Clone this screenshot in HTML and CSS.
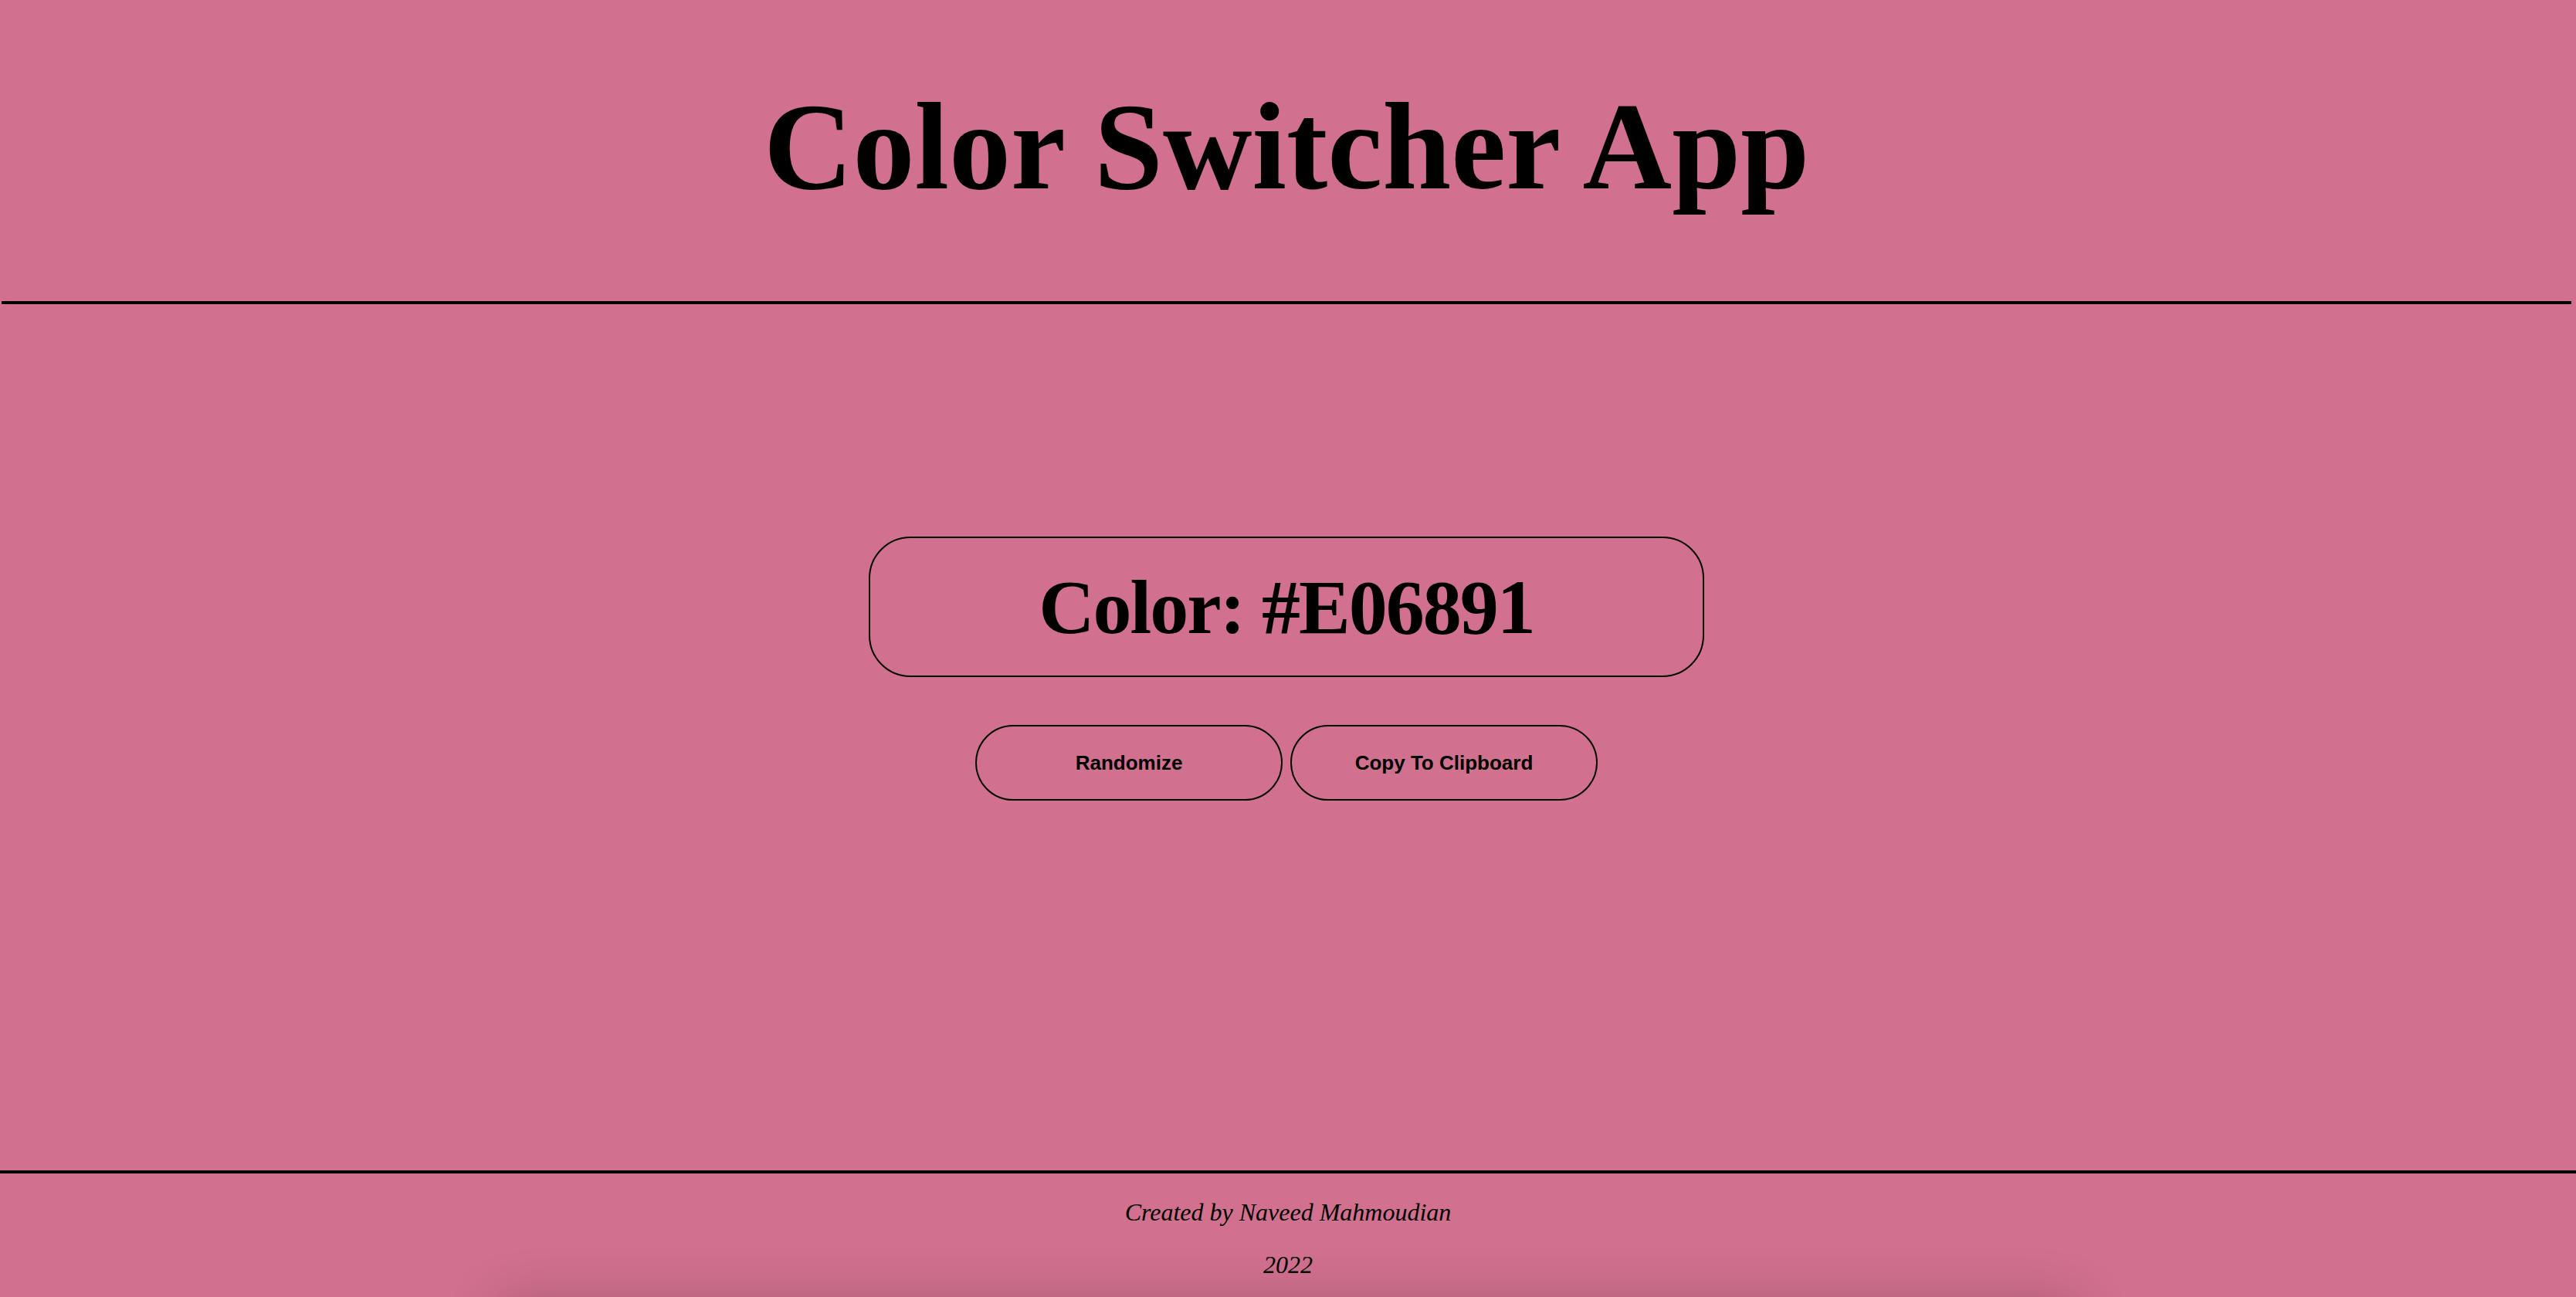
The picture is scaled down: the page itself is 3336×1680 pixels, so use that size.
FILE: index.html
```html
<!DOCTYPE html>
<html lang="en">
<head>
<meta charset="utf-8">
<title>Color Switcher App</title>
<link rel="stylesheet" href="styles.css">
</head>
<body>
<header class="app-header">
  <h1 class="app-title">Color Switcher App</h1>
</header>
<main class="app-main">
  <div class="color-display">Color: #E06891</div>
  <div class="button-row">
    <button class="pill-button" type="button">Randomize</button>
    <button class="pill-button" type="button">Copy To Clipboard</button>
  </div>
</main>
<footer class="app-footer">
  <p class="footer-line">Created by Naveed Mahmoudian</p>
  <p class="footer-line">2022</p>
</footer>
<div class="below-fold"></div>
</body>
</html>
```
FILE: styles.css
```css
html, body {
  margin: 0;
  padding: 0;
}

body {
  background: #D1708F;
  color: #000;
  font-family: "Liberation Serif", "Times New Roman", serif;
  overflow: hidden;
}

.app-header {
  margin: 0 6px 0 2px;
  padding: 110px 0 120px;
  border-bottom: 4px solid #000;
  text-align: center;
}

.app-title {
  margin: 0;
  font-size: 160px;
  line-height: 160px;
  font-weight: bold;
}

.app-main {
  display: flex;
  flex-direction: column;
  align-items: center;
  padding: 301px 4px 0 0;
  height: 1122px;
  box-sizing: border-box;
}

.color-display {
  box-sizing: border-box;
  width: 1082px;
  height: 182px;
  border: 2px solid #000;
  border-radius: 54px;
  display: flex;
  align-items: center;
  justify-content: center;
  font-size: 100px;
  font-weight: bold;
  line-height: 1;
  letter-spacing: -2px;
  padding-top: 2px;
}

.button-row {
  display: flex;
  gap: 10px;
  margin-top: 62px;
}

.pill-button {
  box-sizing: border-box;
  width: 398px;
  height: 98px;
  border: 2px solid #000;
  border-radius: 49px;
  background: transparent;
  color: #000;
  font-family: "Liberation Sans", Arial, sans-serif;
  font-size: 26px;
  font-weight: bold;
  padding: 0;
}

.app-footer {
  border-top: 4px solid #000;
  text-align: center;
  padding: 32px 0;
}

.footer-line {
  margin: 0;
  font-size: 32px;
  line-height: 36px;
  font-style: italic;
}

.footer-line + .footer-line {
  margin-top: 32px;
}

.below-fold {
  width: 2040px;
  height: 200px;
  margin: 0 auto;
  box-shadow: 0 0 70px rgba(0, 0, 0, 0.22);
}
```
